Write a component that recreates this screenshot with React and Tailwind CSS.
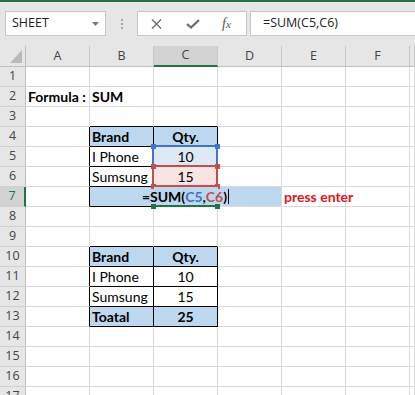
import React from 'react';

const COLS = ['A', 'B', 'C', 'D', 'E', 'F', ''];

function inT1(r) { return r >= 4 && r <= 7; }
function inT2(r) { return r >= 10 && r <= 13; }
function inT(r) { return inT1(r) || inT2(r); }

function cellContent(r, c) {
  if (r === 2 && c === 0) return { t: 'Formula :', b: true };
  if (r === 2 && c === 1) return { t: 'SUM', b: true };
  if ((r === 4 || r === 10) && c === 1) return { t: 'Brand', b: true };
  if ((r === 4 || r === 10) && c === 2) return { t: 'Qty.', b: true, center: true };
  if ((r === 5 || r === 11) && c === 1) return { t: 'I Phone' };
  if ((r === 5 || r === 11) && c === 2) return { t: '10', center: true };
  if ((r === 6 || r === 12) && c === 1) return { t: 'Sumsung' };
  if ((r === 6 || r === 12) && c === 2) return { t: '15', center: true };
  if (r === 13 && c === 1) return { t: 'Toatal', b: true };
  if (r === 13 && c === 2) return { t: '25', b: true, center: true };
  if (r === 7 && c === 4) return { t: 'press enter', b: true, red: true };
  return null;
}

function Cell({ r, c }) {
  const tableCol = c === 1 || c === 2;
  let right = 'border-r-[#d9d9d9]';
  let bottom = 'border-b-[#d9d9d9]';
  let bg = 'bg-white';
  if (c === 0 && inT(r)) right = 'border-r-black';
  if (tableCol && inT(r)) right = 'border-r-black';
  if (tableCol && r === 7) right = 'border-r-[#bdd7ee]';
  if (tableCol && (inT(r) || r === 3 || r === 9)) bottom = 'border-b-black';
  if (tableCol && (r === 4 || r === 10 || r === 13 || r === 7)) bg = 'bg-[#bdd7ee]';
  if (c === 3 && r === 7) bg = 'bg-[#bdd7ee]';
  if (c === 2 && r === 5) bg = 'bg-[#dde8f5]';
  if (c === 2 && r === 6) bg = 'bg-[#f9e4e4]';

  const w = c === 6 ? 'flex-1' : 'w-[64px]';
  const content = cellContent(r, c);
  const special = (c === 2 && (r === 5 || r === 6 || r === 7)) || (c === 4 && r === 7);

  return (
    <div className={`${special ? 'relative z-10' : ''} ${w} h-full shrink-0 border-r border-b ${right} ${bottom} ${bg} flex items-end`}>
      {content && (
        <div
          className={`w-full whitespace-nowrap leading-[18px] ${content.center ? 'text-center' : 'pl-[2px]'} ${content.b ? 'font-bold' : 'font-normal'} ${content.red ? 'text-[#e0141c]' : 'text-black'}`}
        >
          {content.t}
        </div>
      )}
      {r === 7 && c === 2 && (
        <>
          <div className="w-full flex justify-center">
            <div className="flex-none whitespace-nowrap font-bold leading-[18px] text-black flex items-end">
              <span>=SUM(</span>
              <span className="text-[#4472c4]">C5</span>
              <span>,</span>
              <span className="text-[#c0504d]">C6</span>
              <span>)</span>
              <span className="inline-block w-px h-[15px] bg-black ml-[1px] mb-[2px]"></span>
            </div>
          </div>
          <div className="absolute left-[-2px] right-[-1px] bottom-[-1px] h-[2px] bg-[#217346]"></div>
          <div className="absolute left-[-3px] bottom-[-3px] w-[5px] h-[5px] bg-[#217346]"></div>
          <div className="absolute right-[-3px] bottom-[-3px] w-[5px] h-[5px] bg-[#217346]"></div>
        </>
      )}
      {r === 5 && c === 2 && (
        <>
          <div className="absolute top-[-2px] left-[-2px] right-[-1px] bottom-[-1px] border-2 border-[#4472c4]"></div>
          <div className="absolute top-[-3px] left-[-3px] w-[5px] h-[5px] bg-[#4472c4]"></div>
          <div className="absolute top-[-3px] right-[-3px] w-[5px] h-[5px] bg-[#4472c4]"></div>
        </>
      )}
      {r === 6 && c === 2 && (
        <>
          <div className="absolute top-[-2px] left-[-2px] right-[-1px] bottom-[-1px] border-2 border-[#c0504d]"></div>
          <div className="absolute top-[-3px] left-[-3px] w-[5px] h-[5px] bg-[#c0504d]"></div>
          <div className="absolute top-[-3px] right-[-3px] w-[5px] h-[5px] bg-[#c0504d]"></div>
          <div className="absolute bottom-[-3px] left-[-3px] w-[5px] h-[5px] bg-[#c0504d]"></div>
          <div className="absolute bottom-[-3px] right-[-3px] w-[5px] h-[5px] bg-[#c0504d]"></div>
        </>
      )}
    </div>
  );
}

function Row({ r }) {
  const active = r === 7;
  return (
    <div className="flex h-[20px]">
      <div
        className={`w-[26px] shrink-0 h-full border-b border-b-[#d0d0d0] ${active ? 'bg-[#d2d2d2] border-r-2 border-r-[#217346] text-[#217346]' : 'bg-[#e6e6e6] border-r border-r-[#bfbfbf] text-[#444]'} flex items-center justify-center text-[12.5px] leading-none`}
        style={{ fontFamily: '"Open Sans", sans-serif' }}
      >
        {r}
      </div>
      {COLS.map((_, c) => (
        <Cell key={c} r={r} c={c} />
      ))}
    </div>
  );
}

export default function App() {
  const rows = [];
  for (let r = 1; r <= 17; r++) rows.push(r);
  return (
    <div className="w-[415px] h-[395px] overflow-hidden bg-white" style={{ fontFamily: 'Lato, sans-serif' }}>
      <div className="h-[2px] bg-[#217346]"></div>
      <div className="h-[44px] bg-[#e6e6e6] flex items-start pt-[9px] pl-[5px]" style={{ fontFamily: '"Open Sans", sans-serif' }}>
        <div className="w-[101px] h-[25px] bg-white border border-[#c6c6c6] flex items-center pl-[6px] pr-[6px]">
          <span className="text-[12.5px] text-[#222] flex-1">SHEET</span>
          <svg width="7" height="4" viewBox="0 0 7 4"><path d="M0 0H7L3.5 4Z" fill="#7a7a7a" /></svg>
        </div>
        <div className="w-[31px] h-[25px] flex flex-col items-center justify-center gap-[2px]">
          <div className="w-[2px] h-[2px] bg-[#a8a8a8]"></div>
          <div className="w-[2px] h-[2px] bg-[#a8a8a8]"></div>
          <div className="w-[2px] h-[2px] bg-[#a8a8a8]"></div>
        </div>
        <div className="w-[110px] h-[25px] bg-white border border-[#c6c6c6] flex items-center">
          <div className="w-[13px]"></div>
          <svg width="11" height="10" viewBox="0 0 11 10">
            <path d="M1 0.5L10 9.5M10 0.5L1 9.5" stroke="#6a6a6a" strokeWidth="1.4" fill="none" />
          </svg>
          <div className="w-[24px]"></div>
          <svg width="14" height="10" viewBox="0 0 14 10">
            <path d="M1 5L5 8.5L13 1" stroke="#6a6a6a" strokeWidth="2.2" fill="none" />
          </svg>
          <div className="w-[22px]"></div>
          <span className="italic text-[#555] text-[14px] leading-none" style={{ fontFamily: '"Liberation Serif", serif' }}>
            f<span className="text-[11px]">x</span>
          </span>
        </div>
        <div className="ml-[3px] flex-1 h-[25px] bg-white border border-[#c6c6c6] border-r-0 flex items-center pl-[12px]">
          <span className="text-[12.5px] text-[#222]">=SUM(C5,C6)</span>
        </div>
      </div>
      <div className="flex h-[21px]" style={{ fontFamily: '"Open Sans", sans-serif' }}>
        <div className="w-[26px] shrink-0 h-full bg-[#e6e6e6] border-r border-b border-r-[#bfbfbf] border-b-[#bfbfbf] flex items-end justify-end pr-[3px] pb-[3px]">
          <svg width="12" height="13" viewBox="0 0 12 13"><path d="M12 0V13H0Z" fill="#b9b9b9" /></svg>
        </div>
        {COLS.map((l, c) => (
          <div
            key={c}
            className={`${c === 6 ? 'flex-1' : 'w-[64px]'} shrink-0 h-full border-r border-r-[#c8c8c8] flex items-center justify-center text-[12.5px] leading-none ${c === 2 ? 'bg-[#d2d2d2] border-b-2 border-b-[#217346] text-[#444]' : 'bg-[#e6e6e6] border-b border-b-[#bfbfbf] text-[#444]'}`}
          >
            {l}
          </div>
        ))}
      </div>
      <div className="text-[14px]">
        {rows.map((r) => (
          <Row key={r} r={r} />
        ))}
      </div>
    </div>
  );
}
